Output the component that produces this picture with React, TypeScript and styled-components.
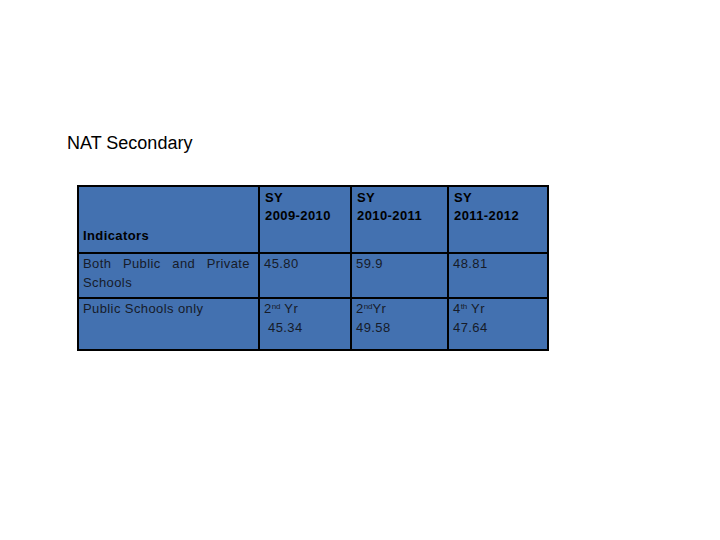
import React from 'react';
import styled, { createGlobalStyle } from 'styled-components';

const GlobalStyle = createGlobalStyle`
  body {
    margin: 0;
    background: #ffffff;
    font-family: "Liberation Sans", Arial, sans-serif;
  }
`;

const Page = styled.div`
  width: 720px;
  height: 540px;
  box-sizing: border-box;
  padding: 133px 0 0 67px;
`;

const Title = styled.h1`
  margin: 0;
  font-size: 18px;
  line-height: 20px;
  font-weight: normal;
  color: #000;
`;

const Table = styled.table`
  margin: 32px 0 0 10px;
  border-collapse: collapse;
  table-layout: fixed;
  background: #4371b0;
  border: 2px solid #000;
`;

const Cell = styled.td<{ $head?: boolean; $bottom?: boolean; $justify?: boolean }>`
  border: 2px solid #000;
  padding: ${(p) => (p.$head ? '2px 5px' : '0 8px 0 4px')};
  vertical-align: ${(p) => (p.$bottom ? 'bottom' : 'top')};
  font-size: 13px;
  line-height: ${(p) => (p.$head ? '18px' : '19px')};
  font-weight: ${(p) => (p.$head ? 'bold' : 'normal')};
  letter-spacing: 0.4px;
  text-align: ${(p) => (p.$justify ? 'justify' : 'left')};
  color: ${(p) => (p.$head ? '#000' : '#161b29')};
  white-space: pre-wrap;
  ${(p) => (p.$bottom ? 'padding: 0 4px 7px;' : '')}
`;

const Row = styled.tr<{ $h: number }>`
  height: ${(p) => p.$h}px;
`;

const Sup = styled.sup`
  font-size: 8px;
  line-height: 0;
  vertical-align: 4px;
  letter-spacing: 0;
`;

const years = ['2009-2010', '2010-2011', '2011-2012'];

export default function App() {
  return (
    <Page>
      <GlobalStyle />
      <Title>NAT Secondary</Title>
      <Table>
        <colgroup>
          <col style={{ width: 181 }} />
          <col style={{ width: 92 }} />
          <col style={{ width: 97 }} />
          <col style={{ width: 100 }} />
        </colgroup>
        <tbody>
          <Row $h={67}>
            <Cell $head $bottom>Indicators</Cell>
            {years.map((y) => (
              <Cell $head key={y}>
                SY
                <br />
                {y}
              </Cell>
            ))}
          </Row>
          <Row $h={45}>
            <Cell $justify>Both Public and Private Schools</Cell>
            <Cell>45.80</Cell>
            <Cell>59.9</Cell>
            <Cell>48.81</Cell>
          </Row>
          <Row $h={52}>
            <Cell>Public Schools only</Cell>
            <Cell>
              2<Sup>nd</Sup> Yr
              <br /> 45.34
            </Cell>
            <Cell>
              2<Sup>nd</Sup>Yr
              <br />
              49.58
            </Cell>
            <Cell>
              4<Sup>th</Sup> Yr
              <br />
              47.64
            </Cell>
          </Row>
        </tbody>
      </Table>
    </Page>
  );
}
